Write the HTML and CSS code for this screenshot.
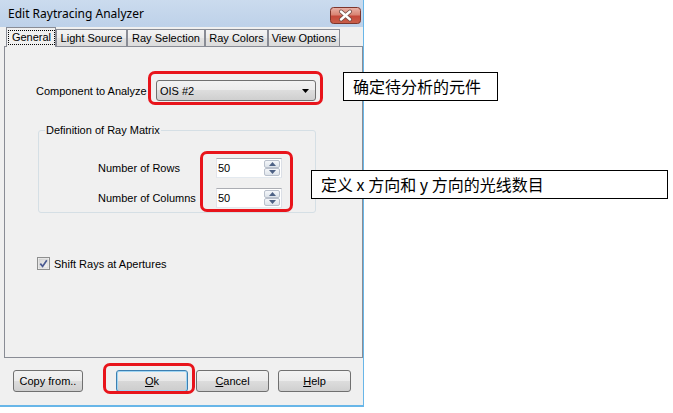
FILE: index.html
```html
<!DOCTYPE html>
<html>
<head>
<meta charset="utf-8">
<link rel="stylesheet" href="styles.css">
</head>
<body>
<div class="stage">
  <div class="window">
    <div class="titlebar">
      <span class="title">Edit Raytracing Analyzer</span>
      <span class="close">
        <svg width="31" height="17" viewBox="0 0 31 17">
          <defs>
            <linearGradient id="cg" x1="0" y1="0" x2="0" y2="1">
              <stop offset="0" stop-color="#eab3a8"/>
              <stop offset="0.45" stop-color="#d98574"/>
              <stop offset="0.55" stop-color="#c5493a"/>
              <stop offset="1" stop-color="#c9604a"/>
            </linearGradient>
          </defs>
          <rect x="0.5" y="0.5" width="30" height="16" rx="3" fill="url(#cg)" stroke="#7d352b"/>
          <path d="M11 4.5 L20 12.5 M20 4.5 L11 12.5" stroke="#6e4a44" stroke-width="4" stroke-linecap="round"/>
          <path d="M11 4.5 L20 12.5 M20 4.5 L11 12.5" stroke="#ffffff" stroke-width="2.4" stroke-linecap="round"/>
        </svg>
      </span>
    </div>
    <div class="body">
      <div class="tabs">
        <div class="tab active"><span class="focus">General</span></div>
        <div class="tab t-light">Light Source</div>
        <div class="tab t-sel">Ray Selection</div>
        <div class="tab t-col">Ray Colors</div>
        <div class="tab t-view">View Options</div>
      </div>
      <div class="panel">
        <div class="comp-row">
          <span class="comp-label">Component to Analyze</span>
          <div class="combo">
            <span>OIS #2</span>
            <svg class="combo-arrow" width="7" height="4" viewBox="0 0 7 4"><path d="M0 0 H7 L3.5 4 Z" fill="#000"/></svg>
          </div>
        </div>
        <fieldset class="group">
          <legend>Definition of Ray Matrix</legend>
          <div class="field">
            <span class="field-label">Number of Rows</span>
            <div class="spin">
              <span class="spin-val">50</span>
              <div class="spin-btns">
                <span class="spin-btn"><svg width="7" height="4" viewBox="0 0 7 4"><path d="M0 4 H7 L3.5 0 Z" fill="#4d6185"/></svg></span>
                <span class="spin-btn"><svg width="7" height="4" viewBox="0 0 7 4"><path d="M0 0 H7 L3.5 4 Z" fill="#4d6185"/></svg></span>
              </div>
            </div>
          </div>
          <div class="field second">
            <span class="field-label">Number of Columns</span>
            <div class="spin">
              <span class="spin-val">50</span>
              <div class="spin-btns">
                <span class="spin-btn"><svg width="7" height="4" viewBox="0 0 7 4"><path d="M0 4 H7 L3.5 0 Z" fill="#4d6185"/></svg></span>
                <span class="spin-btn"><svg width="7" height="4" viewBox="0 0 7 4"><path d="M0 0 H7 L3.5 4 Z" fill="#4d6185"/></svg></span>
              </div>
            </div>
          </div>
        </fieldset>
        <div class="check-row">
          <svg class="checkbox" width="13" height="13" viewBox="0 0 13 13">
            <defs>
              <linearGradient id="kb" x1="0" y1="0" x2="1" y2="1">
                <stop offset="0" stop-color="#d6d6d6"/>
                <stop offset="1" stop-color="#f6f6f6"/>
              </linearGradient>
            </defs>
            <rect x="0.5" y="0.5" width="12" height="12" fill="#f4f4f4" stroke="#8e8f8f"/>
            <rect x="2" y="2" width="9" height="9" fill="url(#kb)" stroke="#c8c8c8" stroke-width="0.6"/>
            <path d="M3.3 6.6 L5.6 9.4 L9.8 3.2" fill="none" stroke="#4a5a92" stroke-width="1.7"/>
          </svg>
          <span>Shift Rays at Apertures</span>
        </div>
      </div>
      <div class="buttons">
        <div class="btn b-copy">Copy from..</div>
        <div class="btn b-ok default"><u>O</u>k</div>
        <div class="btn b-cancel"><u>C</u>ancel</div>
        <div class="btn b-help"><u>H</u>elp</div>
      </div>
    </div>
  </div>

  <div class="callout c1">确定待分析的元件</div>
  <div class="callout c2">定义 x 方向和 y 方向的光线数目</div>

  <div class="hl h1"></div>
  <div class="hl h2"></div>
  <div class="hl h3"></div>
</div>
</body>
</html>
```
FILE: styles.css
```css
* { box-sizing: border-box; }
html, body { margin: 0; padding: 0; background: #fff; }
body {
  font-family: "Liberation Sans", Arial, sans-serif;
  font-size: 11px;
  color: #000;
}
.stage {
  position: relative;
  width: 673px;
  height: 413px;
  overflow: hidden;
}
.window {
  width: 364px;
  height: 407px;
  border-right: 1px solid #68b6e8;
  border-bottom: 2px solid #68b6e8;
  background: #f0f0f0;
  display: flex;
  flex-direction: column;
}
.titlebar {
  height: 27px;
  flex: none;
  display: flex;
  align-items: flex-start;
  padding: 0 2px 0 8px;
  background: linear-gradient(#cbdbee, #bdd1e9);
}
.title {
  font-family: "Noto Sans", "Open Sans", sans-serif;
  font-size: 12px;
  line-height: 16px;
  margin-top: 6px;
  color: #000;
}
.close {
  margin-left: auto;
  margin-top: 7px;
  width: 31px;
  height: 17px;
  display: block;
}
.close svg { display: block; }

.body {
  flex: 1;
  display: flex;
  flex-direction: column;
}
.tabs {
  height: 19px;
  display: flex;
  align-items: flex-end;
  padding-left: 6px;
  position: relative;
  z-index: 1;
}
.tab {
  height: 17px;
  border: 1px solid #898c95;
  border-bottom: none;
  background: linear-gradient(#f4f4f4, #ebebeb 50%, #e2e2e2 50%, #dcdcdc);
  text-align: center;
  line-height: 16px;
  white-space: nowrap;
}
.tab.active {
  width: 50px;
  height: 20px;
  margin-bottom: -1px;
  background: #f0f0f0;
  padding: 2px 0 0 1px;
}
.focus {
  display: block;
  width: 47px;
  height: 15px;
  border: 1px dotted #000;
  line-height: 13px;
}
.t-light { width: 71px; }
.t-sel { width: 78px; }
.t-col { width: 63px; }
.t-view { width: 72px; }
.tab + .tab:not(.active) { margin-left: 0; }

.panel {
  margin-left: 4px;
  width: 359px;
  height: 312px;
  border: 1px solid #898c95;
  display: flex;
  flex-direction: column;
  flex: none;
}
.comp-row {
  display: flex;
  align-items: center;
  margin-top: 33px;
  padding-left: 31px;
}
.comp-label { width: 120px; }
.combo {
  width: 160px;
  height: 21px;
  border: 1px solid #707070;
  border-radius: 3px;
  background: linear-gradient(#f2f2f2, #ebebeb 50%, #dddddd 50%, #cfcfcf);
  display: flex;
  align-items: center;
  padding: 0 6px 0 3px;
  font-size: 11px;
}
.combo-arrow { margin-left: auto; }

.group {
  margin: 23px 0 0 33px;
  width: 278px;
  padding: 21px 0 4px 0;
  border: 1px solid #d5dfe5;
  border-radius: 3px;
  min-width: 0;
}
.group legend {
  font-size: 11px;
  line-height: 13px;
  padding: 0 1px;
  margin-left: 6px;
}
.field {
  display: flex;
  align-items: center;
  height: 20px;
  padding-left: 59px;
}
.field.second { margin-top: 10px; }
.field-label { width: 118px; }
.spin {
  width: 66px;
  height: 20px;
  border: 1px solid #abadb3;
  border-left-color: #e2e3ea;
  border-right-color: #dbdfe6;
  border-bottom-color: #e3e9ef;
  background: #fff;
  display: flex;
}
.spin-val {
  flex: 1;
  padding-left: 1px;
  line-height: 18px;
}
.spin-btns {
  width: 17px;
  display: flex;
  flex-direction: column;
  padding: 1px 1px 1px 0;
}
.spin-btn {
  flex: 1;
  border: 1px solid #b9c0cc;
  border-radius: 2px;
  background: linear-gradient(#f5f7fa, #dde3ea);
  display: flex;
  align-items: center;
  justify-content: center;
}
.spin-btn svg { display: block; }

.check-row {
  display: flex;
  align-items: center;
  margin: 44px 0 0 32px;
  height: 13px;
}
.checkbox { display: block; margin-right: 4px; }

.buttons {
  display: flex;
  margin-top: 12px;
  padding-left: 13px;
}
.btn {
  height: 22px;
  border: 1px solid #707070;
  border-radius: 3px;
  background: linear-gradient(#f2f2f2, #ebebeb 50%, #dddddd 50%, #cfcfcf);
  text-align: center;
  line-height: 20px;
  white-space: nowrap;
}
.btn u { text-decoration: underline; text-underline-offset: 1px; }
.b-copy { width: 70px; }
.b-ok { width: 72px; margin-left: 33px; }
.b-cancel { width: 73px; margin-left: 8px; }
.b-help { width: 73px; margin-left: 9px; }
.btn.default {
  border-color: #3c7fb1;
  box-shadow: inset 0 0 0 1px #9fd5f3;
  background: linear-gradient(#eaf6fd, #d9f0fc 50%, #bee6fd 50%, #a7d9f5);
  background: linear-gradient(#f0f0f0, #e8e8e8 50%, #d8d8d8 50%, #cdcdcd);
}

.callout {
  position: absolute;
  border: 1px solid #000;
  background: #fff;
  font-family: "Noto Sans CJK SC", "Noto Sans", sans-serif;
  font-size: 16px;
  line-height: 26px;
  white-space: nowrap;
}
.c1 { left: 343px; top: 72px; width: 155px; height: 29px; padding-left: 9px; }
.c2 { left: 311px; top: 170px; width: 357px; height: 29px; padding-left: 9px; }

.hl {
  position: absolute;
  border: 3px solid #e8141b;
  border-radius: 7px;
}
.h1 { left: 148px; top: 71px; width: 175px; height: 34px; }
.h2 { left: 200px; top: 151px; width: 93px; height: 61px; }
.h3 { left: 103px; top: 363px; width: 92px; height: 31px; }
```
